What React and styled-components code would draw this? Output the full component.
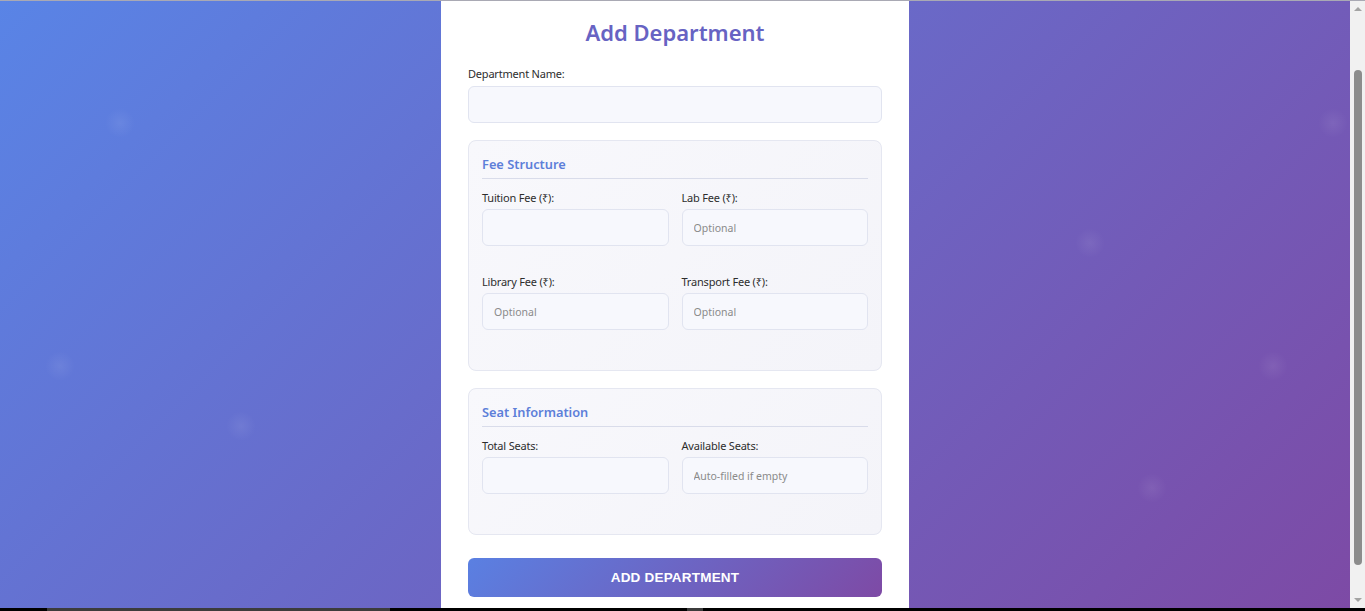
import React from 'react'
import styled, { createGlobalStyle } from 'styled-components'

const GlobalStyle = createGlobalStyle`
  html, body {
    margin: 0;
    padding: 0;
    overflow: hidden;
  }
  body {
    font-family: "Noto Sans", "Open Sans", sans-serif;
  }
  * {
    box-sizing: border-box;
  }
`

const Screen = styled.div`
  display: flex;
  flex-direction: column;
  width: 1365px;
  height: 611px;
`

const TopRule = styled.div`
  height: 1px;
  background: #a9a9b4;
`

const Viewport = styled.div`
  flex: 1;
  display: flex;
  min-height: 0;
`

const Backdrop = styled.main`
  position: relative;
  flex: 1;
  display: flex;
  justify-content: center;
  overflow: hidden;
  background: linear-gradient(135deg, #5984e6 0%, #7d4aa5 100%);
`

const Sparkle = styled.span`
  position: absolute;
  width: 30px;
  height: 30px;
  margin: -15px 0 0 -15px;
  border-radius: 50%;
  background: radial-gradient(circle, rgba(255, 255, 255, 0.07) 0%, rgba(255, 255, 255, 0) 70%);
`

const Card = styled.section`
  width: 468px;
  background: #fff;
  padding: 15px 27px 0;
`

const Title = styled.h2`
  margin: 0 0 18px;
  text-align: center;
  font-size: 22px;
  line-height: 32px;
  font-weight: 600;
  color: #6763c3;
`

const Label = styled.label`
  display: block;
  font-size: 11px;
  letter-spacing: -0.2px;
  line-height: 16px;
  color: #2d2d2d;
  margin-bottom: ${p => p.$tight ? '3px' : '4px'};
`

const Input = styled.input`
  display: block;
  width: 100%;
  height: 37px;
  padding: 0 11px;
  border: 1px solid #e1e4f0;
  border-radius: 6px;
  background: #f7f8fd;
  font-family: inherit;
  font-size: 10.5px;
  color: #333;
  outline: none;

  &::placeholder {
    color: #8a8a8a;
  }
`

const Section = styled.fieldset`
  margin: 17px 0 0;
  padding: 13px 13px 12px;
  border: 1px solid #e5e7f1;
  border-radius: 8px;
  background: linear-gradient(135deg, #f8f8fc 0%, #f4f4f9 100%);
`

const SectionTitle = styled.h3`
  margin: 0 0 11px;
  padding-bottom: 4px;
  border-bottom: 1px solid #d9dcea;
  font-size: 12.8px;
  line-height: 20px;
  font-weight: 600;
  color: #5d7fd9;
`

const Grid = styled.div`
  display: grid;
  grid-template-columns: 1fr 1fr;
  column-gap: 13px;
`

const Group = styled.div`
  margin-bottom: 28px;
`

const SubmitButton = styled.button`
  display: block;
  width: 100%;
  height: 39px;
  margin-top: 23px;
  border: none;
  border-radius: 6px;
  background: linear-gradient(135deg, #5a80e2 0%, #7e4aa5 100%);
  color: #fff;
  font-family: "Liberation Sans", Arial, sans-serif;
  font-weight: 700;
  font-size: 13.5px;
  letter-spacing: 0.2px;
  text-transform: uppercase;
`

const Scrollbar = styled.div`
  width: 15px;
  background: #f1f1f1;
  display: flex;
  flex-direction: column;
  align-items: center;
`

const Arrow = styled.div`
  width: 0;
  height: 0;
  border-left: 4px solid transparent;
  border-right: 4px solid transparent;
  ${p => p.$down
    ? 'border-top: 4px solid #a3a3a3; margin: auto 0 6px;'
    : 'border-bottom: 4px solid #a3a3a3; margin-top: 6px;'}
`

const Thumb = styled.div`
  width: 8px;
  height: 495px;
  margin-top: 59px;
  border-radius: 4px;
  background: #8c8c8c;
`

const Taskbar = styled.div`
  height: 3px;
  background: #000;
  position: relative;
`

const TaskItem = styled.span`
  position: absolute;
  top: 0;
  height: 3px;
  background: #3c3c3c;
`

const sparkles = [
  [120, 122], [1333, 122], [1090, 242], [60, 365],
  [241, 425], [1273, 365], [1152, 487],
]

const Field = ({ label, placeholder, tight }) => (
  <Group>
    <Label $tight={tight}>{label}</Label>
    <Input type="text" placeholder={placeholder} />
  </Group>
)

export default function App() {
  return (
    <Screen>
      <GlobalStyle />
      <TopRule />
      <Viewport>
        <Backdrop>
          {sparkles.map(([x, y]) => (
            <Sparkle key={`${x}-${y}`} style={{ left: x, top: y }} />
          ))}
          <Card>
            <Title>Add Department</Title>
            <Label>Department Name:</Label>
            <Input type="text" />

            <Section>
              <SectionTitle>Fee Structure</SectionTitle>
              <Grid>
                <Field tight label="Tuition Fee (₹):" />
                <Field tight label="Lab Fee (₹):" placeholder="Optional" />
                <Field tight label="Library Fee (₹):" placeholder="Optional" />
                <Field tight label="Transport Fee (₹):" placeholder="Optional" />
              </Grid>
            </Section>

            <Section>
              <SectionTitle>Seat Information</SectionTitle>
              <Grid>
                <Field tight label="Total Seats:" />
                <Field tight label="Available Seats:" placeholder="Auto-filled if empty" />
              </Grid>
            </Section>

            <SubmitButton type="button">Add Department</SubmitButton>
          </Card>
        </Backdrop>
        <Scrollbar>
          <Arrow />
          <Thumb />
          <Arrow $down />
        </Scrollbar>
      </Viewport>
      <Taskbar>
        <TaskItem style={{ left: 47, width: 343 }} />
        <TaskItem style={{ left: 687, width: 16 }} />
      </Taskbar>
    </Screen>
  )
}
